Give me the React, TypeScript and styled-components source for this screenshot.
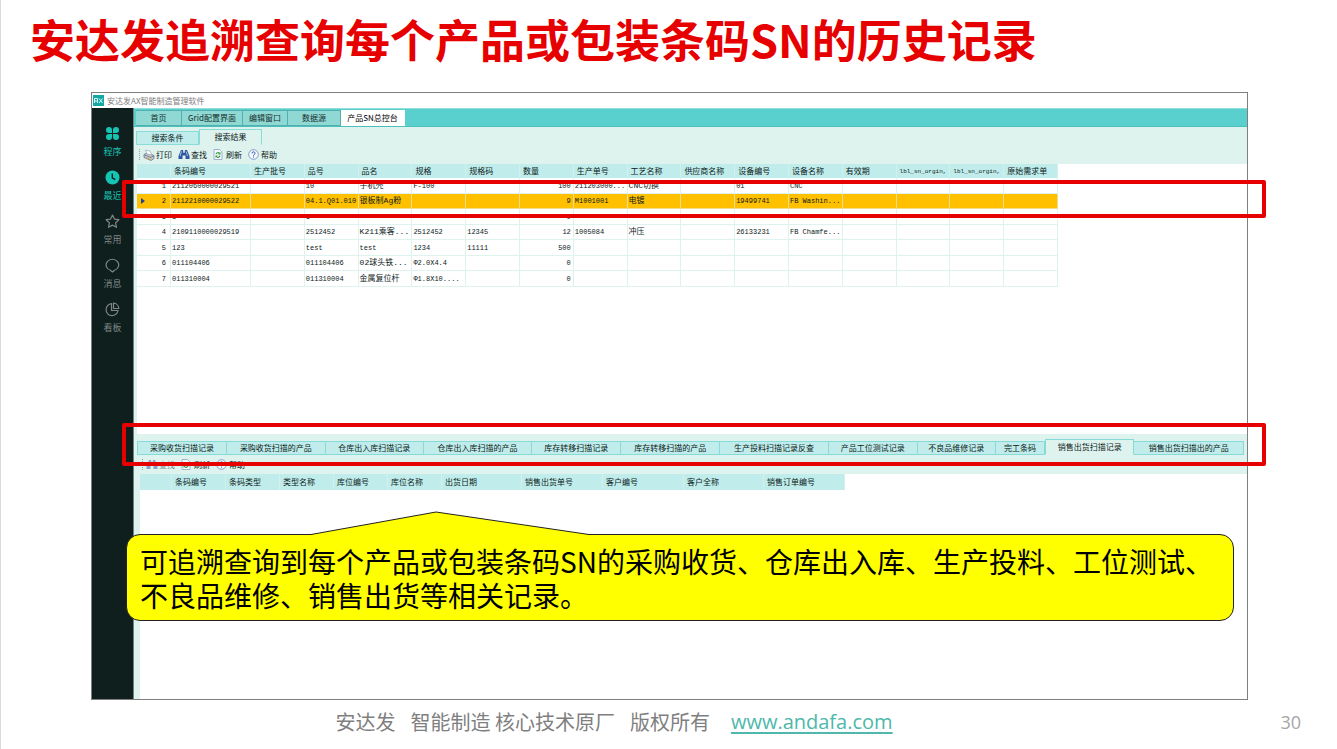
import React from "react";
import styled, { createGlobalStyle } from "styled-components";

const GlobalStyle = createGlobalStyle`
  * { box-sizing: border-box; }
  body { margin: 0; background: #fff; }
  button { font: inherit; color: inherit; background: none; border: 0; padding: 0; margin: 0; cursor: pointer; }
`;

const sans = `"Noto Sans CJK SC", "Noto Sans", sans-serif`;

const Slide = styled.div`
  min-height: 100vh;
  display: flex;
  flex-direction: column;
  border-left: 1px solid #d9d9d9;
  font-family: ${sans};
  overflow: hidden;
`;

const Title = styled.h1`
  margin: 0;
  padding: 6px 0 0 29px;
  height: 92px;
  font-size: 45px;
  line-height: 66px;
  font-weight: 700;
  color: #e60000;
  white-space: nowrap;
`;

const AppWindow = styled.main`
  position: relative;
  flex: 1;
  display: flex;
  flex-direction: column;
  margin: 0 89px 0 90px;
  border: 1px solid #7f7f7f;
  font-size: 8px;
  line-height: 12px;
  color: #0c1a1a;
`;

const TitleBar = styled.header`
  display: flex;
  align-items: center;
  gap: 3px;
  height: 15px;
  padding-left: 1px;
  color: #7d7d7d;
`;

const Body = styled.div`
  flex: 1;
  display: flex;
`;

const Sidebar = styled.nav`
  flex: 0 0 42px;
  display: flex;
  flex-direction: column;
  padding-top: 18px;
  background: #0f1f1e;
  border-right: 1px solid #6d8582;
`;

const SideItem = styled.button<{ $active?: boolean }>`
  height: 44px;
  display: flex;
  flex-direction: column;
  align-items: center;
  gap: 4px;
  font-size: 9px;
  line-height: 14px;
  color: ${(p) => (p.$active ? "#16c4b4" : "#7d8685")};
`;

const Workspace = styled.div`
  flex: 1;
  min-width: 0;
  display: flex;
  flex-direction: column;
  background: #def3ee;
`;

const MainTabs = styled.div`
  display: flex;
  align-items: flex-end;
  height: 19px;
  padding-left: 2px;
  background: #5ad0ce;
  border-top: 1px solid #8fdedb;
  border-bottom: 1px solid #4dbfbd;
`;

const MainTab = styled.button<{ $width: number; $active?: boolean }>`
  width: ${(p) => p.$width}px;
  height: 16px;
  border: 1px solid ${(p) => (p.$active ? "#fff" : "#4fb0ad")};
  border-left-width: 0;
  background: ${(p) => (p.$active ? "#fff" : "#90d8d3")};
  color: ${(p) => (p.$active ? "#000" : "#16302f")};
  white-space: nowrap;
`;

const SubTabs = styled.div`
  display: flex;
  align-items: flex-end;
  height: 18px;
  padding-left: 2px;
`;

const SubTab = styled.button<{ $active?: boolean }>`
  width: 63px;
  height: ${(p) => (p.$active ? 16 : 14)}px;
  border: 1px solid #8adcd9;
  border-bottom-color: ${(p) => (p.$active ? "#def3ee" : "#8adcd9")};
  background: ${(p) => (p.$active ? "#def3ee" : "#c0edeb")};
`;

const Toolbar = styled.div<{ $low?: boolean }>`
  display: flex;
  align-items: center;
  gap: 6px;
  height: 19px;
  padding-left: ${(p) => (p.$low ? 8 : 5)}px;
`;

const Grip = styled.span`
  height: 11px;
  margin-right: -3px;
  border-left: 1px dotted #8aa5a2;
`;

const ToolButton = styled.button<{ $muted?: boolean }>`
  display: grid;
  grid-template-columns: 12px auto;
  align-items: center;
  gap: 1px;
  opacity: ${(p) => (p.$muted ? 0.5 : 1)};
`;

const ResultPane = styled.section`
  height: 270px;
  margin-left: 3px;
  background: #fff;
`;

const Grid = styled.table`
  table-layout: fixed;
  border-collapse: separate;
  border-spacing: 0;
  width: 921px;
`;

const HeadCell = styled.th<{ $height: number }>`
  height: ${(p) => p.$height}px;
  padding: 0 0 0 3px;
  background: #c0edeb;
  border-right: 1px solid #d2f1ee;
  font-weight: 400;
  text-align: left;
  line-height: 12px;
  white-space: nowrap;
  overflow: hidden;
`;

const HeadMono = styled.span`
  font-family: "Liberation Mono", monospace;
  font-size: 6px;
`;

const Row = styled.tr<{ $selected?: boolean }>`
  height: 16px;
  background: ${(p) => (p.$selected ? "#ffc000" : "#fff")};
  &:nth-child(even) { height: 15px; }
  td { border-color: ${(p) => (p.$selected ? "#f3dc8a" : "#def3ee")}; }
`;

const Cell = styled.td<{ $right?: boolean; $cjk?: boolean }>`
  padding: 0 ${(p) => (p.$right ? 2 : 0)}px 0 1px;
  border-right: 1px solid;
  border-bottom: 1px solid;
  font-family: "Liberation Mono", ${sans};
  font-size: ${(p) => (p.$cjk ? 8 : 7)}px;
  line-height: 12px;
  text-align: ${(p) => (p.$right ? "right" : "left")};
  white-space: nowrap;
  overflow: hidden;
`;

const IndexCell = styled(Cell)`
  padding: 0 4px;
`;

const IndexInner = styled.span`
  display: flex;
  align-items: center;
  justify-content: space-between;
`;

const DetailTabs = styled.div`
  display: flex;
  align-items: flex-end;
  height: 21px;
  padding: 0 3px;
`;

const DetailTab = styled.button<{ $weight: number; $active?: boolean }>`
  flex: ${(p) => p.$weight} 1 0;
  min-width: 0;
  height: ${(p) => (p.$active ? 16 : 14)}px;
  border: 1px solid #86dbd9;
  border-left-width: ${(p) => (p.$active ? 1 : 0)}px;
  border-bottom-color: ${(p) => (p.$active ? "#def3ee" : "#86dbd9")};
  background: ${(p) => (p.$active ? "#def3ee" : "#c0edeb")};
  white-space: nowrap;
  &:first-child { border-left-width: 1px; }
`;

const DetailPane = styled.section`
  flex: 1;
  margin-left: 6px;
  background: #fff;
`;

const DetailGrid = styled(Grid)`
  width: 705px;
`;

const Highlight = styled.div<{ $top: number; $height: number }>`
  position: absolute;
  left: 30px;
  right: -19px;
  top: ${(p) => p.$top}px;
  height: ${(p) => p.$height}px;
  border: 4px solid #e60000;
  border-radius: 2px;
  pointer-events: none;
`;

const Callout = styled.aside`
  position: absolute;
  left: 34px;
  right: 13px;
  top: 441px;
  padding: 9px 13px 8px;
  border: 1px solid #222;
  border-radius: 14px;
  background: #ff0;
  color: #000;
  font-size: 28px;
  line-height: 34px;
`;

const CalloutTip = styled.svg`
  position: absolute;
  left: 184px;
  top: -24px;
`;

const CalloutText = styled.p`
  margin: 0;
`;

const Footer = styled.footer`
  display: flex;
  justify-content: center;
  align-items: center;
  position: relative;
  height: 49px;
  padding-bottom: 6px;
  padding-right: 110px;
  gap: 15px;
  font-size: 20px;
  line-height: 28px;
  color: #7f7f7f;
`;

const Phrase = styled.span`
  white-space: nowrap;
`;

const SiteLink = styled.a`
  margin-left: 6px;
  font-family: "Open Sans", sans-serif;
  color: #4db8ab;
  text-decoration: underline;
  text-underline-offset: 3px;
`;

const PageNumber = styled.span`
  position: absolute;
  right: 36px;
  font-family: "Open Sans", sans-serif;
  font-size: 18px;
  color: #a6a6a6;
`;

const Logo = () => (
  <svg width="11" height="11" viewBox="0 0 11 11" aria-hidden="true">
    <rect width="11" height="11" fill="#14a8a4" />
    <path d="M1.500 8V3.500h3V8M1.500 6h3M6 3.500L9.500 8M9.500 3.500L6 8" fill="none" stroke="#d8fbf8" strokeWidth="1" />
  </svg>
);

const CloverIcon = () => (
  <svg width="15" height="15" viewBox="0 0 15 15" fill="currentColor" aria-hidden="true">
    <path d="M7 7H4A3 3 0 1 1 7 4zM8 7V4a3 3 0 1 1 3 3zM7 8v3a3 3 0 1 1-3-3zM8 8h3a3 3 0 1 1-3 3z" />
  </svg>
);

const ClockIcon = () => (
  <svg width="15" height="15" viewBox="0 0 15 15" aria-hidden="true">
    <circle cx="7.500" cy="7.500" r="7" fill="currentColor" />
    <path d="M7.300 3.500v4.300l3 1.900" fill="none" stroke="#0f1f1e" strokeWidth="1.400" />
  </svg>
);

const StarIcon = () => (
  <svg width="15" height="15" viewBox="0 0 15 15" aria-hidden="true">
    <path d="M7.500 1l1.900 4.100 4.500.6-3.300 3.100.9 4.500-4-2.200-4 2.200.9-4.500L1.100 5.700l4.500-.6z" fill="none" stroke="currentColor" strokeWidth="1.200" strokeLinejoin="round" />
  </svg>
);

const ChatIcon = () => (
  <svg width="15" height="15" viewBox="0 0 15 15" aria-hidden="true">
    <path d="M5.300 12.300A6.300 5.700 0 1 1 9.500 12.300L7.500 14z" fill="none" stroke="currentColor" strokeWidth="1.200" strokeLinejoin="round" />
  </svg>
);

const PieIcon = () => (
  <svg width="15" height="15" viewBox="0 0 15 15" fill="none" stroke="currentColor" strokeWidth="1.200" aria-hidden="true">
    <path d="M6.500 1.700A6 6 0 1 0 13 8.500H6.500z" />
    <path d="M8.500 1.200v5.300h5.300A5.500 5.500 0 0 0 8.500 1.200z" />
  </svg>
);

const PrinterIcon = () => (
  <svg width="12" height="12" viewBox="0 0 12 12" aria-hidden="true">
    <path d="M1 5.500l3-1.500 7 2.500v3L8 11.500 1 8.500z" fill="#c3c9d2" stroke="#5b6675" strokeWidth=".7" />
    <path d="M2.500 1l4.500 1 2 4-5-1z" fill="#fff" stroke="#8b9aa6" strokeWidth=".6" />
    <path d="M1.500 6L8 8.500l3-2" fill="none" stroke="#5b6675" strokeWidth=".7" />
    <path d="M3.500 9l4 1.500" stroke="#d8a343" strokeWidth="1" />
  </svg>
);

const BinocularsIcon = () => (
  <svg width="12" height="11" viewBox="0 0 12 11" aria-hidden="true">
    <path d="M3 1h2l.5 3h1L7 1h2l2.500 6v3h-4V6.500h-3V10h-4V7z" fill="#31559e" />
    <path d="M3.500 2.500L2 7M8.200 2.500L9.500 7" stroke="#b8cdf2" strokeWidth=".9" />
  </svg>
);

const RefreshIcon = () => (
  <svg width="10" height="11" viewBox="0 0 10 11" aria-hidden="true">
    <path d="M1 .5h5.500L9 3v7.500H1z" fill="#f8fbff" stroke="#8aa0c0" strokeWidth=".8" />
    <path d="M3 5.200a2 2 0 0 1 3.600-.6M7 6.700a2 2 0 0 1-3.600.8" fill="none" stroke="#2e9b3c" strokeWidth="1.200" />
    <path d="M7.500 3v2.500H5zM2.500 9V6.500H5z" fill="#2e9b3c" />
  </svg>
);

const HelpIcon = () => (
  <svg width="11" height="11" viewBox="0 0 11 11" aria-hidden="true">
    <circle cx="5.500" cy="5.500" r="4.800" fill="#f4f8ff" stroke="#6f87bd" strokeWidth=".8" />
    <path d="M4 4.400a1.500 1.500 0 1 1 2.300 1.200c-.6.300-.8.500-.8 1.100M5.500 7.600v1" fill="none" stroke="#2d55b0" strokeWidth="1" />
  </svg>
);

const Marker = () => (
  <svg width="4" height="6" viewBox="0 0 4 6" aria-hidden="true">
    <path d="M0 0l4 3-4 3z" fill="#23409a" />
  </svg>
);

const sideItems = [
  { label: "程序", icon: <CloverIcon />, active: true },
  { label: "最近", icon: <ClockIcon />, active: true },
  { label: "常用", icon: <StarIcon /> },
  { label: "消息", icon: <ChatIcon /> },
  { label: "看板", icon: <PieIcon /> },
];

const mainTabs = [
  { label: "首页", width: 46 },
  { label: "Grid配置界面", width: 61 },
  { label: "编辑窗口", width: 45 },
  { label: "数据源", width: 53 },
  { label: "产品SN总控台", width: 64, active: true },
];

const columns = [
  "条码编号", "生产批号", "品号", "品名", "规格", "规格码", "数量", "生产单号", "工艺名称",
  "供应商名称", "设备编号", "设备名称", "有效期", "lbl_sn_orgin,", "lbl_sn_orgin,", "原始需求单",
];

const rows: string[][] = [
  ["2112060000029521", "", "10", "手机壳", "F-100", "", "100", "211203000...", "CNC切换", "", "01", "CNC"],
  ["2112210000029522", "", "04.1.Q01.010", "银板制Ag粉", "", "", "9", "M1001001", "电镀", "", "19499741", "FB Washin..."],
  ["1", "", "1", "", "", "", "0"],
  ["2109110000029519", "", "2512452", "K211乘客...", "2512452", "12345", "12", "1005084", "冲压", "", "26133231", "FB Chamfe..."],
  ["123", "", "test", "test", "1234", "11111", "500"],
  ["011104406", "", "011104406", "02球头铁...", "Φ2.0X4.4", "", "0"],
  ["011310004", "", "011310004", "金属复位杆", "Φ1.8X10....", "", "0"],
];

const detailTabs = [
  { label: "采购收货扫描记录", weight: 89 },
  { label: "采购收货扫描的产品", weight: 99 },
  { label: "仓库出入库扫描记录", weight: 98 },
  { label: "仓库出入库扫描的产品", weight: 109 },
  { label: "库存转移扫描记录", weight: 89 },
  { label: "库存转移扫描的产品", weight: 99 },
  { label: "生产投料扫描记录反查", weight: 109 },
  { label: "产品工位测试记录", weight: 89 },
  { label: "不良品维修记录", weight: 78 },
  { label: "完工条码", weight: 49 },
  { label: "销售出货扫描记录", weight: 88, active: true },
  { label: "销售出货扫描出的产品", weight: 110 },
];

const detailColumns = [
  { label: "", width: 32 },
  { label: "条码编号", width: 54 },
  { label: "条码类型", width: 54 },
  { label: "类型名称", width: 54 },
  { label: "库位编号", width: 54 },
  { label: "库位名称", width: 54 },
  { label: "出货日期", width: 80 },
  { label: "销售出货单号", width: 81 },
  { label: "客户编号", width: 81 },
  { label: "客户全称", width: 80 },
  { label: "销售订单编号", width: 81 },
];

const hasCjk = (text: string) => /[\u4e00-\u9fff]/.test(text);

export default function App() {
  return (
    <>
      <GlobalStyle />
      <Slide lang="zh-CN">
        <Title>安达发追溯查询每个产品或包装条码SN的历史记录</Title>
        <AppWindow>
          <TitleBar>
            <Logo />
            <span>安达发AX智能制造管理软件</span>
          </TitleBar>
          <Body>
            <Sidebar>
              {sideItems.map((item) => (
                <SideItem key={item.label} $active={item.active}>
                  {item.icon}
                  {item.label}
                </SideItem>
              ))}
            </Sidebar>
            <Workspace>
              <MainTabs>
                {mainTabs.map((tab) => (
                  <MainTab key={tab.label} $width={tab.width} $active={tab.active}>
                    {tab.label}
                  </MainTab>
                ))}
              </MainTabs>
              <SubTabs>
                <SubTab>搜索条件</SubTab>
                <SubTab $active>搜索结果</SubTab>
              </SubTabs>
              <Toolbar>
                <Grip />
                <ToolButton><PrinterIcon />打印</ToolButton>
                <ToolButton><BinocularsIcon />查找</ToolButton>
                <ToolButton><RefreshIcon />刷新</ToolButton>
                <ToolButton><HelpIcon />帮助</ToolButton>
              </Toolbar>
              <ResultPane>
                <Grid>
                  <colgroup>
                    <col width="34" />
                    <col width="80" />
                    {columns.slice(1).map((_, i) => <col key={i} />)}
                  </colgroup>
                  <thead>
                    <tr>
                      <HeadCell $height={12} />
                      {columns.map((name, i) => (
                        <HeadCell key={i} $height={12}>
                          {hasCjk(name) ? name : <HeadMono>{name}</HeadMono>}
                        </HeadCell>
                      ))}
                    </tr>
                  </thead>
                  <tbody>
                    {rows.map((row, r) => (
                      <Row key={r} $selected={r === 1}>
                        <IndexCell>
                          <IndexInner>
                            {r === 1 ? <Marker /> : <span />}
                            {r + 1}
                          </IndexInner>
                        </IndexCell>
                        {columns.map((_, c) => (
                          <Cell key={c} $right={c === 6} $cjk={hasCjk(row[c] ?? "")}>
                            {row[c]}
                          </Cell>
                        ))}
                      </Row>
                    ))}
                  </tbody>
                </Grid>
              </ResultPane>
              <DetailTabs>
                {detailTabs.map((tab) => (
                  <DetailTab key={tab.label} $weight={tab.weight} $active={tab.active}>
                    {tab.label}
                  </DetailTab>
                ))}
              </DetailTabs>
              <Toolbar $low>
                <Grip />
                <ToolButton $muted disabled><BinocularsIcon />查找</ToolButton>
                <ToolButton><RefreshIcon />刷新</ToolButton>
                <ToolButton><HelpIcon />帮助</ToolButton>
              </Toolbar>
              <DetailPane>
                <DetailGrid>
                  <colgroup>
                    {detailColumns.map((col, i) => <col key={i} width={col.width} />)}
                  </colgroup>
                  <thead>
                    <tr>
                      {detailColumns.map((col, i) => (
                        <HeadCell key={i} $height={16}>{col.label}</HeadCell>
                      ))}
                    </tr>
                  </thead>
                </DetailGrid>
              </DetailPane>
            </Workspace>
          </Body>
          <Highlight $top={87} $height={38} />
          <Highlight $top={330} $height={43} />
          <Callout>
            <CalloutTip width="278" height="25" viewBox="0 0 278 25" aria-hidden="true">
              <path d="M0 25L0 23.500L125 1L278 23.500V25z" fill="#ff0" />
              <path d="M0 23.500L125 1L278 23.500" fill="none" stroke="#222" />
            </CalloutTip>
            <CalloutText>
              可追溯查询到每个产品或包装条码SN的采购收货、仓库出入库、生产投料、工位测试、不良品维修、销售出货等相关记录。
            </CalloutText>
          </Callout>
        </AppWindow>
        <Footer>
          <Phrase>安达发</Phrase>
          <Phrase>智能制造 核心技术原厂</Phrase>
          <Phrase>版权所有</Phrase>
          <SiteLink href="http://www.andafa.com">www.andafa.com</SiteLink>
          <PageNumber>30</PageNumber>
        </Footer>
      </Slide>
    </>
  );
}
